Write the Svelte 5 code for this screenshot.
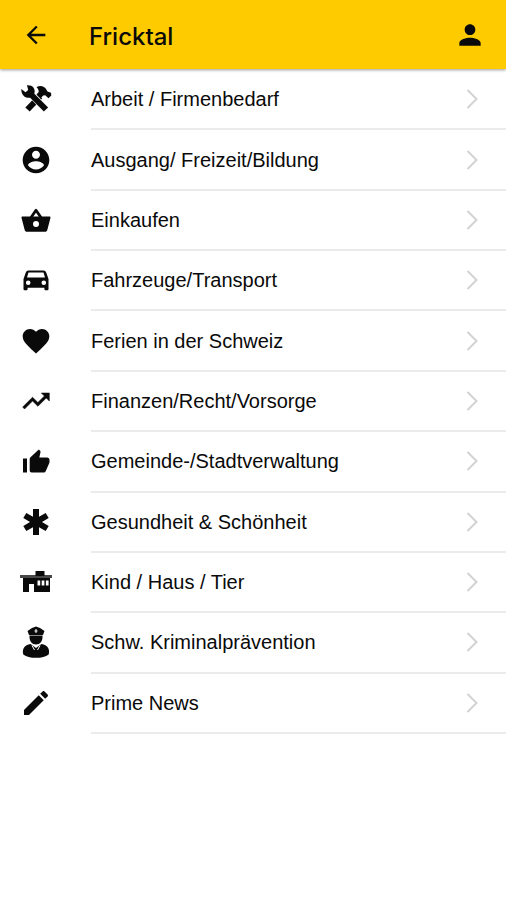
<script lang="ts">
	type Category = { icon: string; label: string };

	const categories: Category[] = [
		{ icon: 'tools', label: 'Arbeit / Firmenbedarf' },
		{ icon: 'account', label: 'Ausgang/ Freizeit/Bildung' },
		{ icon: 'basket', label: 'Einkaufen' },
		{ icon: 'car', label: 'Fahrzeuge/Transport' },
		{ icon: 'heart', label: 'Ferien in der Schweiz' },
		{ icon: 'trend', label: 'Finanzen/Recht/Vorsorge' },
		{ icon: 'thumb', label: 'Gemeinde-/Stadtverwaltung' },
		{ icon: 'asterisk', label: 'Gesundheit & Schönheit' },
		{ icon: 'house', label: 'Kind / Haus / Tier' },
		{ icon: 'police', label: 'Schw. Kriminalprävention' },
		{ icon: 'pencil', label: 'Prime News' }
	];

	let selected = $state('');
</script>

{#snippet glyph(name: string)}
	{#if name === 'tools'}
		<svg class="icon" viewBox="0 0 32 32" aria-hidden="true">
			<path d="M7.500 26.500 20 13.500" stroke="currentColor" stroke-width="6" />
			<path d="M16.500 4c4-1.800 7-1 9.200 1.500l1.800 3 3.500 1.300.3 2.700-2.800 2.800-3.300-3-2 .2-2.700 3-4.200-3.700 2.400-2.800c.2-2-.7-3.200-2.200-5z" />
			<path d="M11 11 22 22.500" stroke="#fff" stroke-width="7" />
			<path d="M8.500 9 26 26.500" stroke="currentColor" stroke-width="6" />
			<path d="M1.300 6l4.200 3.200L8.200 7 7 2.300c5.500-.5 8.500 3 7.500 8l-4.500 4.500c-5.500.5-9-3.300-8.700-8.800z" />
		</svg>
	{:else if name === 'account'}
		<svg class="icon" viewBox="0 0 24 24" aria-hidden="true">
			<path d="M12 2C6.480 2 2 6.480 2 12s4.480 10 10 10 10-4.480 10-10S17.520 2 12 2zm0 3c1.660 0 3 1.340 3 3s-1.340 3-3 3-3-1.340-3-3 1.340-3 3-3zm0 14.200c-2.500 0-4.710-1.280-6-3.220.03-1.990 4-3.080 6-3.080 1.990 0 5.970 1.090 6 3.080-1.290 1.940-3.500 3.220-6 3.220z" />
		</svg>
	{:else if name === 'basket'}
		<svg class="icon" viewBox="0 0 32 32" aria-hidden="true">
			<path d="M11 13.500 16 6.300l5 7.200" fill="none" stroke="currentColor" stroke-width="2.800" stroke-linejoin="round" />
			<path fill-rule="evenodd" d="M2.500 12.500h27c.8 0 1.200.6 1 1.300L27.300 26c-.3 1.200-1 1.800-2.300 1.800H7c-1.300 0-2-.6-2.300-1.800L1.500 13.800c-.2-.7.2-1.300 1-1.300zM16 17a3 3 0 1 0 0 6 3 3 0 0 0 0-6z" />
		</svg>
	{:else if name === 'car'}
		<svg class="icon" viewBox="0 0 32 32" aria-hidden="true">
			<path fill-rule="evenodd" d="M8.500 6.500h15c1.300 0 2.300.7 2.700 2L28.500 15v10c0 .8-.5 1.300-1.300 1.300h-1.500c-.8 0-1.300-.5-1.300-1.300v-1.300H7.600V25c0 .8-.5 1.300-1.300 1.300H4.800c-.8 0-1.300-.5-1.300-1.300V15l2.300-6.500c.4-1.300 1.400-2 2.700-2zM8.500 8.500 7 13.500h18l-1.500-5zM8.200 16.500a2.300 2.300 0 1 0 0 4.600 2.300 2.300 0 0 0 0-4.600zm15.600 0a2.300 2.300 0 1 0 0 4.600 2.300 2.300 0 0 0 0-4.600z" />
		</svg>
	{:else if name === 'heart'}
		<svg class="icon" viewBox="0 0 24 24" aria-hidden="true">
			<path d="M12 21.350l-1.450-1.320C5.400 15.360 2 12.280 2 8.500 2 5.420 4.420 3 7.500 3c1.740 0 3.410.81 4.500 2.090C13.090 3.810 14.760 3 16.500 3 19.580 3 22 5.420 22 8.500c0 3.780-3.400 6.860-8.550 11.540L12 21.350z" />
		</svg>
	{:else if name === 'trend'}
		<svg class="icon" viewBox="0 0 24 24" aria-hidden="true">
			<path d="M16 6l2.290 2.290-4.880 4.880-4-4L2 16.590 3.410 18l6-6 4 4 6.300-6.290L22 12V6z" stroke="currentColor" stroke-width=".4" />
		</svg>
	{:else if name === 'thumb'}
		<svg class="icon" viewBox="0 0 32 32" aria-hidden="true">
			<path d="M3 13.500h4v14H3zM9.700 25.500V14.200c0-.8.3-1.400.8-1.900L18.800 4.500l1.300 1.200c.4.4.5 1 .4 1.600l-1.200 5.200H27c1.500 0 2.500 1 2.500 2.400v2.200c0 .4-.1.700-.2 1l-3.500 7.800c-.5 1-1.200 1.600-2.400 1.600H11.700c-1.200 0-2-.8-2-2z" />
		</svg>
	{:else if name === 'asterisk'}
		<svg class="icon" viewBox="0 0 32 32" aria-hidden="true">
			<path d="M13 3h6v7.800l6.700-3.900 3 5.200L22 16l6.700 3.900-3 5.200-6.700-3.900V29h-6v-7.800l-6.700 3.900-3-5.200L10 16l-6.700-3.900 3-5.200 6.700 3.900z" />
		</svg>
	{:else if name === 'house'}
		<svg class="icon" viewBox="0 0 32 32" aria-hidden="true">
			<path d="M15.500 5h9v5h-9z" />
			<path d="M0 9h32v3H0z" opacity=".75" />
			<path fill-rule="evenodd" d="M3 12h27v14H14v-8H9v8H3zM17.500 14.500v5h2.700v-5zm4.200 0v5h2.700v-5zm4.200 0v5h2.700v-5z" />
		</svg>
	{:else if name === 'police'}
		<svg class="icon" viewBox="0 0 32 32" aria-hidden="true">
			<path d="M7.500 5 12 2l4-1.500L20 2l4.500 3-1.500 4H9z" />
			<path d="M9.500 10h13c.3 5-2.500 8.500-6.500 8.500S9.200 15 9.500 10z" />
			<path d="M3.300 28.500C1.800 23 4.500 19 10.500 18l5.500 4 5.500-4c6 1 8.700 5 7.200 10.500-3 2.500-7.200 3.300-12.700 3.300s-9.700-.8-12.700-3.300z" />
			<path d="M16 3v4M14.500 5h3M12 19.500l2.500 4.500M20 19.500 17.500 24" fill="none" stroke="#fff" />
			<path d="M9.500 9.500h13" stroke="#888" />
		</svg>
	{:else}
		<svg class="icon" viewBox="0 0 24 24" aria-hidden="true">
			<path d="M3 17.250V21h3.750L17.810 9.940l-3.750-3.750L3 17.250zM20.710 7.040c.39-.39.39-1.020 0-1.410l-2.340-2.340c-.39-.39-1.020-.39-1.410 0l-1.830 1.830 3.750 3.750 1.830-1.830z" />
		</svg>
	{/if}
{/snippet}

<header class="bar">
	<button class="bar-btn" aria-label="Zurück">
		<svg class="back" viewBox="0 0 24 24" aria-hidden="true">
			<path d="M20 11H7.830l5.590-5.590L12 4l-8 8 8 8 1.410-1.410L7.830 13H20v-2z" />
		</svg>
	</button>
	<h1>Fricktal</h1>
	<button class="bar-btn" aria-label="Profil">
		<svg class="icon" viewBox="0 0 24 24" aria-hidden="true">
			<path d="M12 12c2.210 0 4-1.790 4-4s-1.790-4-4-4-4 1.790-4 4 1.790 4 4 4zm0 2c-2.670 0-8 1.340-8 4v2h16v-2c0-2.660-5.330-4-8-4z" />
		</svg>
	</button>
</header>

<main>
	<ul class="list">
		{#each categories as category}
			<li>
				<button
					class="row"
					class:active={selected === category.label}
					onclick={() => (selected = category.label)}
				>
					<span class="lead">{@render glyph(category.icon)}</span>
					<span class="body">
						<span class="label">{category.label}</span>
						<svg class="chevron" viewBox="0 0 12 20" aria-hidden="true">
							<path d="M1.500 1l9 9-9 9" />
						</svg>
					</span>
				</button>
			</li>
		{/each}
	</ul>
</main>

<style>
	:global(body) {
		margin: 0;
		background: #fff;
		color: #0a0a0a;
		font-family: 'Liberation Sans', Arial, sans-serif;
	}

	button {
		padding: 0;
		border: 0;
		background: none;
		color: inherit;
		font: inherit;
		cursor: pointer;
	}

	svg {
		display: block;
		fill: currentColor;
	}

	.bar {
		position: relative;
		display: flex;
		align-items: center;
		height: 69px;
		padding-top: 1px;
		box-sizing: border-box;
		background: #fdcb00;
		box-shadow: 0 1px 3px rgba(0, 0, 0, 0.4);
	}

	.bar-btn {
		display: flex;
		justify-content: center;
		align-items: center;
		width: 72px;
		height: 48px;
	}

	.back {
		width: 28px;
		height: 28px;
	}

	h1 {
		flex: 1;
		margin: 0;
		padding: 3px 0 0 17px;
		font-family: Inter, 'Liberation Sans', sans-serif;
		font-size: 24px;
		font-weight: 500;
		line-height: 32px;
	}

	.icon {
		width: 32px;
		height: 32px;
	}

	.list {
		display: grid;
		grid-auto-rows: 1fr;
		min-height: 664px;
		margin: 0;
		padding: 1px 0 0;
		list-style: none;
	}

	li {
		display: flex;
	}

	.row {
		flex: 1;
		display: flex;
		align-items: stretch;
		text-align: left;
	}

	.row.active {
		background: #f5f5f5;
	}

	.lead {
		display: flex;
		align-items: center;
		justify-content: center;
		width: 72px;
		margin-right: 19px;
		padding-bottom: 2px;
	}

	.body {
		flex: 1;
		display: flex;
		align-items: center;
		justify-content: space-between;
		padding-right: 28px;
		border-bottom: 2px solid #ebebeb;
	}

	.label {
		font-size: 20px;
		line-height: 24px;
	}

	.chevron {
		width: 12px;
		height: 20px;
		fill: none;
		stroke: #d2d2d2;
		stroke-width: 2;
	}
</style>
